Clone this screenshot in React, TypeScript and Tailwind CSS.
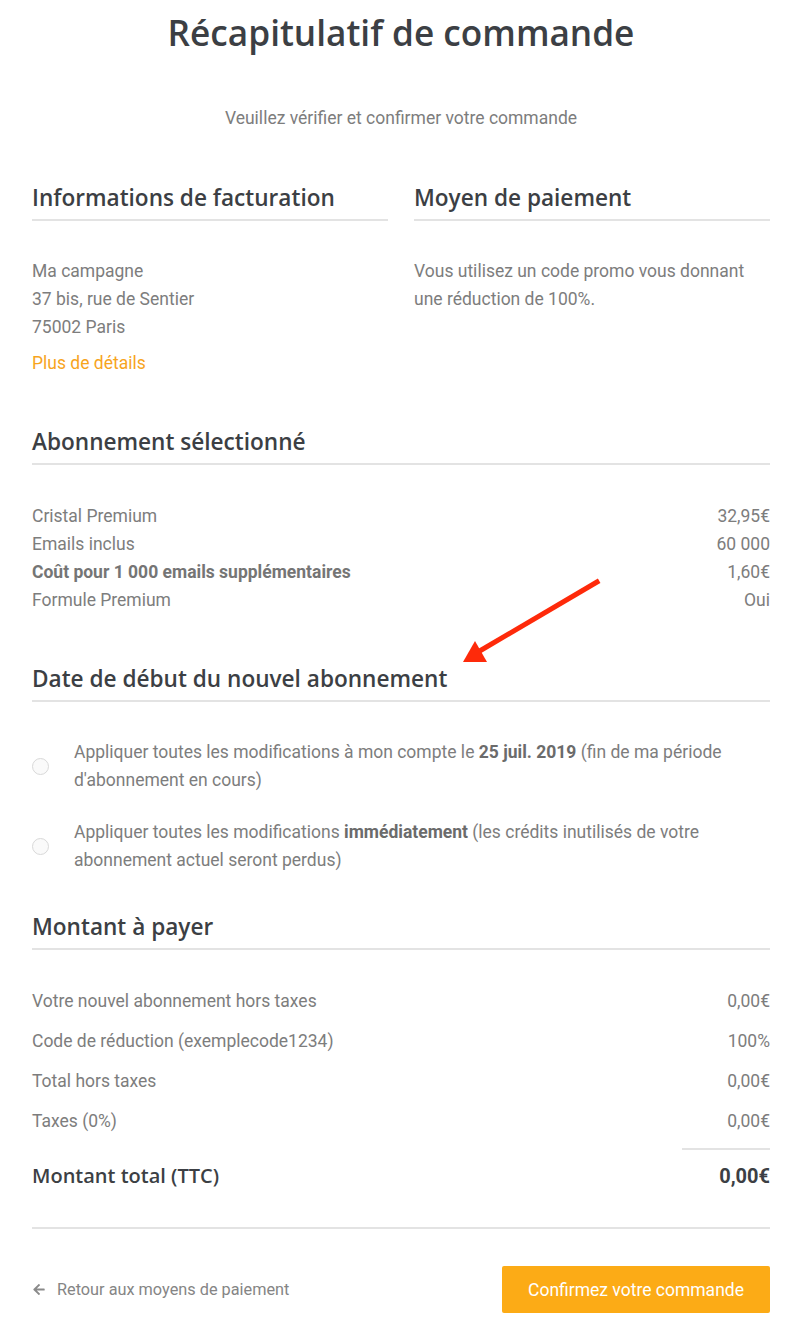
import * as React from 'react';
import { FaArrowLeft } from 'react-icons/fa';

const heading = "font-['Open_Sans',sans-serif] font-semibold text-[#3c3f44]";

function SectionTitle({ children }: { children: React.ReactNode }) {
  return (
    <h2 className={`${heading} border-b-2 border-[#e3e3e3] pb-[6px] text-[22.6px] leading-[30px]`}>{children}</h2>
  );
}

function Row({ label, value, bold = false }: { label: string; value: string; bold?: boolean }) {
  return (
    <div className="flex items-center justify-between">
      <span className={bold ? 'font-bold text-[#757575]' : ''}>{label}</span>
      <span>{value}</span>
    </div>
  );
}

function Radio({ children }: { children: React.ReactNode }) {
  return (
    <label className="flex items-center gap-[25px]">
      <span className="h-[17px] w-[17px] shrink-0 rounded-full border border-[#d9d9d9] bg-[#fafafa]" />
      <span>{children}</span>
    </label>
  );
}

export default function App() {
  return (
    <div className="relative mx-auto w-[800px] bg-white pb-4 pl-8 pr-[30px] pt-2 font-['Roboto',sans-serif] text-[17.5px] leading-[28px] text-[#7d7d7d]">
      <h1 className={`${heading} text-center text-[35.2px] leading-[48px]`}>Récapitulatif de commande</h1>
      <p className="mt-[50px] text-center text-[17.5px] leading-[24px]">Veuillez vérifier et confirmer votre commande</p>

      <div className="mt-[53px] grid grid-cols-2 gap-[26px]">
        <div>
          <SectionTitle>Informations de facturation</SectionTitle>
          <div className="mt-[36px]">
            <div>Ma campagne</div>
            <div>37 bis, rue de Sentier</div>
            <div>75002 Paris</div>
          </div>
          <a className="mt-[8px] block text-[#f7a41d]">Plus de détails</a>
        </div>
        <div>
          <SectionTitle>Moyen de paiement</SectionTitle>
          <p className="mt-[36px]">Vous utilisez un code promo vous donnant une réduction de 100%.</p>
        </div>
      </div>

      <div className="mt-[50px]">
        <SectionTitle>Abonnement sélectionné</SectionTitle>
        <div className="mt-[37px]">
          <Row label="Cristal Premium" value="32,95€" />
          <Row label="Emails inclus" value="60 000" />
          <Row label="Coût pour 1 000 emails supplémentaires" value="1,60€" bold />
          <Row label="Formule Premium" value="Oui" />
        </div>
      </div>

      <div className="mt-[50px]">
        <SectionTitle>Date de début du nouvel abonnement</SectionTitle>
        <div className="mt-[36px] flex flex-col gap-[24px]">
          <Radio>
            Appliquer toutes les modifications à mon compte le <b className="font-bold text-[#6b6b6b]">25 juil. 2019</b> (fin de ma période d'abonnement en cours)
          </Radio>
          <Radio>
            Appliquer toutes les modifications <b className="font-bold text-[#6b6b6b]">immédiatement</b> (les crédits inutilisés de votre abonnement actuel seront perdus)
          </Radio>
        </div>
      </div>

      <div className="mt-[38px]">
        <SectionTitle>Montant à payer</SectionTitle>
        <div className="mt-[31px] leading-[40px]">
          <Row label="Votre nouvel abonnement hors taxes" value="0,00€" />
          <Row label="Code de réduction (exemplecode1234)" value="100%" />
          <Row label="Total hors taxes" value="0,00€" />
          <Row label="Taxes (0%)" value="0,00€" />
        </div>
        <div className="ml-auto mt-[7px] w-[88px] border-t-2 border-[#e3e3e3]" />
        <div className="mt-[11px] flex items-center justify-between leading-[30px]">
          <span className={`${heading} text-[20px]`}>Montant total (TTC)</span>
          <span className="text-[20px] font-bold text-[#3c3f44]">0,00€</span>
        </div>
      </div>

      <div className="mt-[36px] border-t-2 border-[#e3e3e3]" />

      <div className="mt-[37px] flex items-center justify-between">
        <a className="flex items-center gap-[11px] text-[16.3px] text-[#858585]">
          <FaArrowLeft className="h-[13px] w-[14px] text-[#8a8a8a]" />
          Retour aux moyens de paiement
        </a>
        <button className="h-[47px] w-[268px] rounded-[2px] bg-[#fcab16] text-[17.5px] text-white">Confirmez votre commande</button>
      </div>

      <svg className="pointer-events-none absolute left-0 top-0" width="800" height="1329" viewBox="0 0 800 1329">
        <line x1="597" y1="582" x2="478" y2="652" stroke="#fe2a0a" strokeWidth="5" strokeLinecap="square" />
        <polygon points="463,662 475,641 487,662" fill="#fe2a0a" />
      </svg>
    </div>
  );
}
